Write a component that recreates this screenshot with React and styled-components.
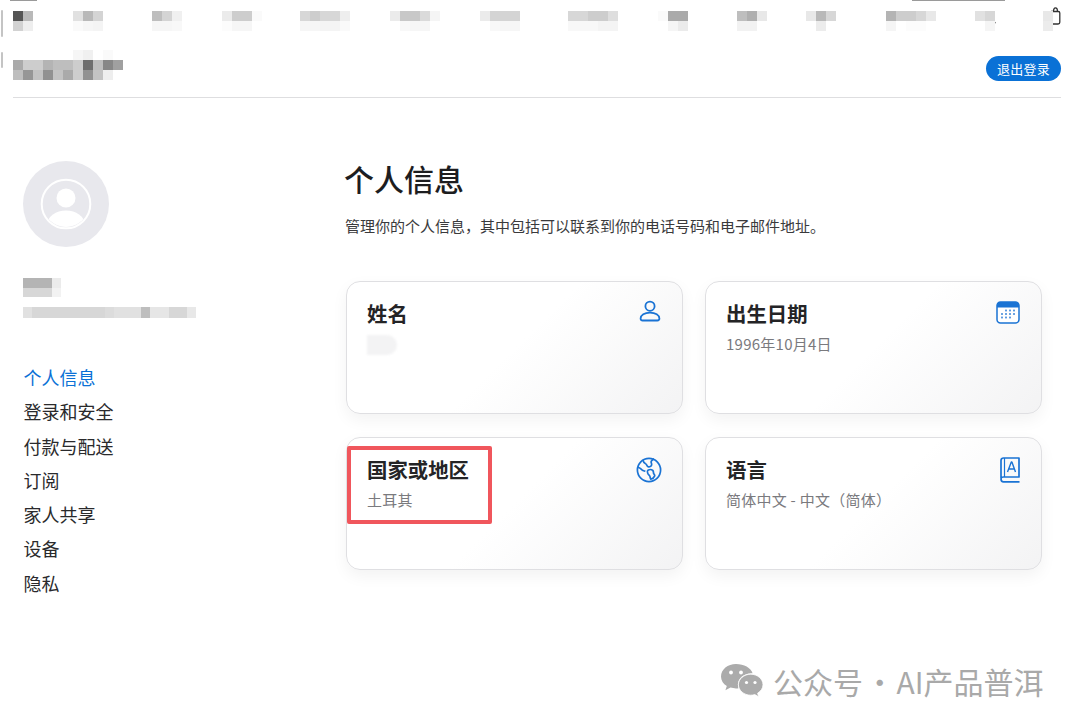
import React from "react";
import styled, { createGlobalStyle } from "styled-components";

const Global = createGlobalStyle`
  html, body { margin: 0; padding: 0; background: #fff; }
  body { font-family: "Noto Sans CJK SC", "Noto Sans", sans-serif; color: #1d1d1f; }
  #root { width: 1080px; height: 725px; overflow: hidden; }
`;

const Page = styled.div`
  position: relative;
  width: 1080px;
  height: 725px;
  overflow: hidden;
  background: #fff;
`;
const TopBar = styled.div`
  display: flex;
  align-items: flex-start;
  height: 50px;
  padding: 11px 0 0 13px;
  box-sizing: border-box;
`;
const BagSlot = styled.div`
  margin: -4px 0 0 -10px;
  line-height: 0;
  color: #333;
`;
const TitleRow = styled.div`
  display: flex;
  justify-content: space-between;
  align-items: flex-start;
  height: 47px;
  margin: 0 19px 0 13px;
  border-bottom: 1px solid #dedee0;
`;
const Button = styled.button`
  width: 75px;
  height: 25px;
  margin-top: 6px;
  padding: 0;
  border: 0;
  border-radius: 13px;
  background: #0a71d6;
  color: #fff;
  font: 13px "Noto Sans CJK SC", sans-serif;
  letter-spacing: 0.3px;
`;
const Mosaic = styled.div`
  display: grid;
  grid-template-columns: repeat(${(p) => p.$cols}, ${(p) => p.$w}px);
  grid-auto-rows: ${(p) => p.$h}px;
  margin-left: ${(p) => p.$ml || 0}px;
  margin-top: ${(p) => p.$mt || 0}px;
  filter: blur(0.6px);
  flex: none;
`;
const Cell = styled.div`
  background: ${(p) => p.$c};
`;
const Main = styled.div`
  display: flex;
  padding: 63px 39px 0 23px;
`;
const Sidebar = styled.aside`
  width: 322px;
  flex: none;
`;
const Avatar = styled.div`
  width: 86px;
  height: 86px;
  border-radius: 50%;
  background: #e8e8ed;
  display: flex;
  align-items: center;
  justify-content: center;
`;
const NavList = styled.nav`
  display: flex;
  flex-direction: column;
  margin-top: 42px;
  padding-left: 0.5px;
`;
const NavItem = styled.a`
  height: 34.3px;
  line-height: 34.3px;
  font-size: 18px;
  color: ${(p) => (p.$active ? "#0a71d6" : "#2a2a2c")};
`;
const Content = styled.section`
  flex: 1;
`;
const Title = styled.h1`
  margin: -2px 0 0 -1px;
  font-size: 30px;
  font-weight: 500;
  line-height: 38px;
  color: #1d1d1f;
`;
const Desc = styled.p`
  margin: 19px 0 0;
  font-size: 15px;
  line-height: 20px;
  color: #3a3a3c;
`;
const Grid = styled.div`
  display: grid;
  grid-template-columns: 337px 337px;
  grid-auto-rows: 133px;
  column-gap: 22px;
  row-gap: 23px;
  margin: 45px 0 0 1px;
`;
const Card = styled.article`
  position: relative;
  box-sizing: border-box;
  padding: 16px 20px;
  border: 1px solid #dfdfe2;
  border-radius: 14px;
  background: linear-gradient(135deg, #ffffff 50%, #f3f3f4 100%);
  box-shadow: 0 6px 16px rgba(0, 0, 0, 0.05);
`;
const CardTitle = styled.h2`
  margin: 0;
  font-size: 20.4px;
  font-weight: 700;
  line-height: 30px;
  color: #242426;
`;
const CardValue = styled.div`
  margin-top: 4px;
  height: 24px;
  line-height: 24px;
  font-size: 15px;
  letter-spacing: 0.25px;
  color: #7a7a7e;
`;
const NameBlur = styled.div`
  width: 30px;
  height: 20px;
  margin-top: 7px;
  background: #f3f3f4;
  border-radius: 0 10px 10px 0;
  filter: blur(1px);
`;
const IconSlot = styled.div`
  position: absolute;
  top: ${(p) => p.$top}px;
  right: ${(p) => p.$right}px;
  color: #1a73d4;
  line-height: 0;
`;
const RedBox = styled.div`
  position: absolute;
  left: 347px;
  top: 446px;
  width: 145px;
  height: 78px;
  box-sizing: border-box;
  border: 4px solid #f0565c;
  border-radius: 2px;
`;
const Watermark = styled.div`
  position: absolute;
  left: 721px;
  top: 662px;
  display: flex;
  align-items: center;
  gap: 10px;
  color: #a9a9a9;
  font-size: 30px;
  line-height: 38px;
  word-spacing: -5px;
  white-space: nowrap;
`;
const Arc = styled.div`
  position: absolute;
  left: 1px;
  top: ${(p) => p.$top}px;
  width: 2px;
  height: ${(p) => p.$h}px;
  border-radius: 2px;
  background: #c4c4c4;
`;
const EdgeStub = styled.div`
  position: absolute;
  top: 0;
  left: ${(p) => p.$left}px;
  width: ${(p) => p.$w}px;
  height: 1px;
  background: #9a9a9a;
`;
const SearchTail = styled.div`
  position: absolute;
  left: 992px;
  top: 21px;
  width: 4px;
  height: 1.5px;
  background: #555;
  transform: rotate(45deg);
`;

const g = (v) => `rgb(${v},${v},${v})`;
const MosaicBlock = ({ data, w = 10, h = 10, ml, mt }) => (
  <Mosaic $cols={data[0].length} $w={w} $h={h} $ml={ml} $mt={mt}>
    {data.flat().map((v, i) => (
      <Cell key={i} $c={g(v)} />
    ))}
  </Mosaic>
);

const topBlocks = [
  { ml: 0, d: [[85, 185], [210, 238]] },
  { ml: 40, d: [[225, 185, 212], [250, 246, 244]] },
  { ml: 49, d: [[190, 212, 240], [246, 246, 248]] },
  { ml: 40, d: [[235, 205, 205, 250], [252, 246, 246, 255]] },
  { ml: 38, d: [[215, 205, 215, 215, 238], [246, 246, 244, 244, 250]] },
  { ml: 40, d: [[235, 200, 200, 218, 245], [255, 248, 246, 246, 255]] },
  { ml: 40, d: [[235, 212, 212, 212], [255, 248, 246, 246]] },
  { ml: 48, d: [[215, 215, 205, 205, 222], [248, 248, 248, 244, 244]] },
  { ml: 40, d: [[250, 170, 170], [255, 245, 235]] },
  { ml: 49, d: [[190, 175, 232], [242, 242, 255]] },
  { ml: 39, d: [[232, 185, 215], [255, 236, 255]] },
  { ml: 50, d: [[180, 205, 205, 215, 232], [245, 255, 252, 252, 255]] },
  { ml: 39, d: [[225, 215], [255, 245]] },
  { ml: 48, d: [[232], [236]] },
];

const BagIcon = () => (
  <svg width="18" height="19" viewBox="0 0 18 19" fill="none" stroke="currentColor" strokeWidth="1.300">
    <path d="M8 4.500h7.300c.8 0 1.500.7 1.500 1.500v9.200c0 1-.7 1.800-1.700 1.800H8" />
    <path d="M10.500 4.500c0-2.300.7-3.600 2-3.600s2 1.300 2 3.600" />
  </svg>
);
const PersonIcon = () => (
  <svg width="24" height="24" viewBox="0 0 24 24" fill="none" stroke="currentColor" strokeWidth="1.800">
    <circle cx="12" cy="7.200" r="4.600" />
    <path d="M2.600 19.600c0-3.600 4-6 9.400-6s9.400 2.400 9.400 6c0 1.200-.8 1.900-2 1.900H4.600c-1.200 0-2-.7-2-1.900z" />
  </svg>
);
const CalendarIcon = () => (
  <svg width="24" height="23" viewBox="0 0 24 23">
    <rect x="1" y="1" width="22" height="21" rx="3.500" fill="#fff" stroke="#1a73d4" strokeWidth="1.500" />
    <path d="M1 4a3.500 3.500 0 0 1 3.500-3h15A3.500 3.500 0 0 1 23 4v2.500H1z" fill="#1a73d4" />
    <g fill="#4a8fdc">
      {[[10, 9.500], [14, 9.500], [18, 9.500], [6, 13], [10, 13], [14, 13], [18, 13], [6, 16.500], [10, 16.500], [14, 16.500]].map(([x, y]) => (
        <rect key={`${x}-${y}`} x={x - 0.9} y={y - 0.9} width="1.800" height="1.800" />
      ))}
    </g>
  </svg>
);
const GlobeIcon = () => (
  <svg width="26" height="26" viewBox="0 0 26 26" fill="none" stroke="currentColor" strokeWidth="1.700" strokeLinejoin="round">
    <circle cx="13" cy="13" r="11.600" />
    <path d="M7 3.200c.3 2 1.200 3 2.600 3.600 1.300.5 1 2.200 2.400 2.800 1.600.6 3.200-.3 3.600-1.700.4-1.300-.6-2-.5-3.200 0-1 1.500-2 3-3" />
    <path d="M1.800 10c1.600.8 3 1.600 4.200 2.900 1 1 2.400 1 3.400 1.400" />
    <path d="M12 13.200c1.600-.9 3.800-.6 4.800.3 1 .9.400 2.200.9 3.100.5.900 1.300 1.300 1 2.300-.5 1.400-2.300 2.900-3.900 3.300-.8-.9-.5-2.300-1.100-3.300-.6-1-1.600-1.400-1.900-2.500-.3-1.200-1-2.200.2-3.200z" />
  </svg>
);
const BookIcon = () => (
  <svg width="20" height="26" viewBox="0 0 20 26" fill="none" stroke="currentColor" strokeWidth="1.700" strokeLinejoin="round">
    <path d="M1 21V3.500C1 2 2 1 3.500 1H19v19H3.300C2 20 1 20.500 1 22s1 2.800 2.500 2.800H19.500" />
    <path d="M4.500 1v19" strokeWidth="1.200" />
    <path d="M7.500 15 11.300 5h.6l3.600 10M8.700 12h5.600" strokeWidth="1.400" />
  </svg>
);
const AvatarIcon = () => (
  <svg width="52" height="52" viewBox="0 0 52 52">
    <defs>
      <clipPath id="avatar-clip">
        <circle cx="26" cy="26" r="23" />
      </clipPath>
    </defs>
    <circle cx="26" cy="26" r="24.300" fill="none" stroke="#fff" strokeWidth="2" />
    <circle cx="26" cy="20" r="9.500" fill="#fff" />
    <ellipse cx="26" cy="46" rx="18.500" ry="13.500" fill="#fff" clipPath="url(#avatar-clip)" />
  </svg>
);
const WeChatIcon = () => (
  <svg width="42" height="34" viewBox="0 0 42 34">
    <path d="M15 0C6.800 0 0 5.500 0 12.400c0 4 2.200 7.300 5.800 9.600L4.400 26.200l5.100-2.600c1.800.5 3.600.8 5.500.8 1 0 1.800 0 2.500-.2-.4-1.200-.6-2.300-.6-3.600 0-6.300 6-11.400 13.500-11.400h1.200C29.900 3.800 23 0 15 0z" fill="#ababab" />
    <circle cx="10" cy="8.500" r="1.900" fill="#fff" />
    <circle cx="20" cy="8.500" r="1.900" fill="#fff" />
    <path d="M42 20.700C42 14.900 36.300 10.200 29.700 10.200S17.400 14.900 17.400 20.700s5.700 10.500 12.300 10.500c1.400 0 2.800-.2 4.100-.6l3.900 2.200-1.100-3.600c3.300-2.100 5.400-5 5.400-8.500z" fill="#ababab" stroke="#fff" strokeWidth="0.800" />
    <circle cx="25.500" cy="18.500" r="1.600" fill="#fff" />
    <circle cx="34" cy="18.500" r="1.600" fill="#fff" />
  </svg>
);

const cards = [
  { title: "姓名", blur: true, icon: <PersonIcon />, top: 17, right: 20 },
  { title: "出生日期", value: "1996年10月4日", icon: <CalendarIcon />, top: 19, right: 21 },
  { title: "国家或地区", value: "土耳其", icon: <GlobeIcon />, top: 19, right: 20 },
  { title: "语言", value: "简体中文 - 中文（简体）", icon: <BookIcon />, top: 19, right: 21 },
];
const nav = ["个人信息", "登录和安全", "付款与配送", "订阅", "家人共享", "设备", "隐私"];

export default function App() {
  return (
    <Page>
      <Global />
      <EdgeStub $left={10} $w={27} />
      <EdgeStub $left={912} $w={93} />
      <Arc $top={10} $h={27} />
      <Arc $top={52} $h={16} />
      <SearchTail />
      <TopBar>
        {topBlocks.map((b, i) => (
          <MosaicBlock key={i} data={b.d} ml={b.ml} />
        ))}
        <BagSlot>
          <BagIcon />
        </BagSlot>
      </TopBar>
      <TitleRow>
        <MosaicBlock
          data={[
            [255, 255, 255, 255, 255, 255, 246, 240, 255, 250, 255],
            [170, 205, 205, 180, 190, 190, 205, 110, 190, 135, 160],
            [190, 150, 195, 145, 195, 170, 205, 145, 195, 238, 255],
          ]}
        />
        <Button>退出登录</Button>
      </TitleRow>
      <Main>
        <Sidebar>
          <Avatar>
            <AvatarIcon />
          </Avatar>
          <MosaicBlock data={[[180, 180, 180, 235], [215, 215, 215, 242]]} w={9.500} h={9.500} mt={31} />
          <MosaicBlock
            data={[[225, 215, 215, 215, 215, 215, 215, 215, 215, 220, 225, 225, 225, 190, 230, 230, 215, 215, 232]]}
            w={9.100}
            h={11}
            mt={10}
          />
          <NavList>
            {nav.map((n, i) => (
              <NavItem key={n} $active={i === 0}>
                {n}
              </NavItem>
            ))}
          </NavList>
        </Sidebar>
        <Content>
          <Title>个人信息</Title>
          <Desc>管理你的个人信息，其中包括可以联系到你的电话号码和电子邮件地址。</Desc>
          <Grid>
            {cards.map((c) => (
              <Card key={c.title}>
                <CardTitle>{c.title}</CardTitle>
                {c.blur ? <NameBlur /> : <CardValue>{c.value}</CardValue>}
                <IconSlot $top={c.top} $right={c.right}>
                  {c.icon}
                </IconSlot>
              </Card>
            ))}
          </Grid>
        </Content>
      </Main>
      <RedBox />
      <Watermark>
        <WeChatIcon />
        <span>公众号 · AI产品普洱</span>
      </Watermark>
    </Page>
  );
}
